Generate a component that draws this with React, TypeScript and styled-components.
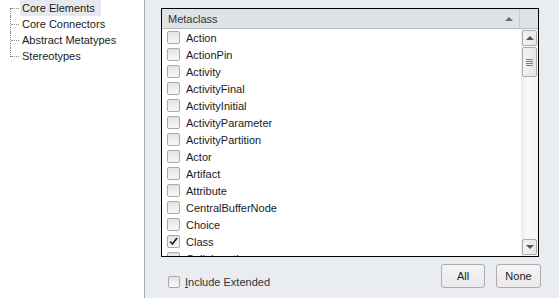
import * as React from 'react'
import styled, { createGlobalStyle } from 'styled-components'

const GlobalStyle = createGlobalStyle`
  html, body {
    margin: 0;
    padding: 0;
    background: #e9ecf1;
  }
  body {
    font-family: 'Liberation Sans', Arial, sans-serif;
    font-size: 11px;
    color: #000;
  }
`

const Window = styled.div`
  width: 559px;
  height: 298px;
  display: flex;
  background: #e9ecf1;
  overflow: hidden;
`

const TreePanel = styled.div`
  width: 145px;
  flex-shrink: 0;
  box-sizing: border-box;
  background: #fff;
  border-right: 1px solid #a3a8b1;
  padding-left: 10px;
  display: flex;
  flex-direction: column;
`

const TreeRow = styled.div<{ $first?: boolean; $last?: boolean }>`
  position: relative;
  height: 16px;
  display: flex;
  align-items: center;
  padding-left: 10px;
  color: #1a1a1a;

  &::before {
    content: '';
    position: absolute;
    left: 1px;
    top: 8px;
    width: 8px;
    border-top: 1px dotted #8a8a8a;
  }
  &::after {
    content: '';
    position: absolute;
    left: 0;
    top: ${p => (p.$first ? '8px' : '0')};
    height: ${p => (p.$last ? '9px' : p.$first ? '8px' : '16px')};
    border-left: 1px dotted #8a8a8a;
  }
`

const TreeLabel = styled.span<{ $selected?: boolean }>`
  height: 16px;
  line-height: 16px;
  padding: 0 6px 0 2px;
  background: ${p => (p.$selected ? '#e5e8ee' : 'transparent')};
`

const Content = styled.div`
  flex: 1;
  display: flex;
  flex-direction: column;
  padding: 8px 18px 0 16px;
`

const ListBox = styled.div`
  width: 378px;
  height: 249px;
  box-sizing: border-box;
  border: 1px solid #000;
  background: #fff;
  display: flex;
  flex-direction: column;
`

const Header = styled.div`
  height: 20px;
  box-sizing: border-box;
  display: flex;
  background: #dfe2e7;
  border-bottom: 1px solid #b4b8bf;
`

const HeaderCell = styled.div`
  flex: 1;
  display: flex;
  align-items: center;
  justify-content: space-between;
  padding: 0 6px 0 6px;
  color: #333;
`

const HeaderFiller = styled.div`
  width: 18px;
  border-left: 1px solid #c6c9cf;
`

const SortArrow = styled.span`
  width: 0;
  height: 0;
  border-left: 4px solid transparent;
  border-right: 4px solid transparent;
  border-bottom: 4px solid #6b6b6b;
`

const Body = styled.div`
  flex: 1;
  display: flex;
  overflow: hidden;
`

const Rows = styled.div`
  flex: 1;
  overflow: hidden;
`

const Row = styled.div`
  height: 17px;
  display: flex;
  align-items: center;
  padding-left: 5px;
  gap: 6px;
  color: #1a1a1a;
`

const Box = styled.span<{ $size: number }>`
  width: ${p => p.$size}px;
  height: ${p => p.$size}px;
  box-sizing: border-box;
  border: 1px solid #a9a9a9;
  border-radius: 2px;
  background: linear-gradient(#e4e4e4, #f7f7f7);
  display: flex;
  align-items: center;
  justify-content: center;
  flex-shrink: 0;
`

const Scrollbar = styled.div`
  width: 17px;
  margin-left: 1px;
  display: flex;
  flex-direction: column;
  background: linear-gradient(90deg, #ececec, #f9f9f9 40%, #f4f4f4);
  padding: 1px 1px 0 1px;
  box-sizing: border-box;
`

const ScrollButton = styled.div<{ $grow?: boolean }>`
  height: ${p => (p.$grow ? '30px' : '16px')};
  box-sizing: border-box;
  border: 1px solid #a9acb1;
  border-radius: 2px;
  background: linear-gradient(90deg, #f3f3f3, #e6e6e6);
  display: flex;
  align-items: center;
  justify-content: center;
  margin-bottom: 1px;
`

const Track = styled.div`
  flex: 1;
`

const Tri = styled.span<{ $down?: boolean }>`
  width: 0;
  height: 0;
  border-left: 4px solid transparent;
  border-right: 4px solid transparent;
  ${p =>
    p.$down ? 'border-top: 4px solid #555;' : 'border-bottom: 4px solid #555;'}
`

const Grip = styled.span`
  width: 7px;
  height: 7px;
  background: repeating-linear-gradient(#808080 0 1px, transparent 1px 2px);
`

const Footer = styled.div`
  display: flex;
  align-items: flex-start;
  margin-top: 7px;
`

const IncludeLabel = styled.label`
  display: flex;
  align-items: center;
  gap: 5px;
  margin: 12px 0 0 7px;
  height: 12px;
  color: #333;
  u {
    text-decoration: underline;
  }
`

const Buttons = styled.div`
  margin-left: auto;
  display: flex;
  gap: 11px;
`

const Button = styled.button<{ $w: number }>`
  width: ${p => p.$w}px;
  height: 24px;
  border: 1px solid #acacac;
  border-radius: 3px;
  background: linear-gradient(#f4f4f4, #eaeaea);
  font: inherit;
  color: #222;
  padding: 0;
`

const items = [
  'Action',
  'ActionPin',
  'Activity',
  'ActivityFinal',
  'ActivityInitial',
  'ActivityParameter',
  'ActivityPartition',
  'Actor',
  'Artifact',
  'Attribute',
  'CentralBufferNode',
  'Choice',
  'Class',
  'Collaboration',
]

const tree = ['Core Elements', 'Core Connectors', 'Abstract Metatypes', 'Stereotypes']

function Check({ checked, size = 13 }: { checked?: boolean; size?: number }) {
  return (
    <Box $size={size}>
      {checked && (
        <svg width="9" height="9" viewBox="0 0 9 9">
          <path d="M1 4.5 L3.5 7 L8 1" fill="none" stroke="#222" strokeWidth="1.7" />
        </svg>
      )}
    </Box>
  )
}

export default function App() {
  return (
    <Window>
      <GlobalStyle />
      <TreePanel>
        {tree.map((t, i) => (
          <TreeRow key={t} $first={i === 0} $last={i === tree.length - 1}>
            <TreeLabel $selected={i === 0}>{t}</TreeLabel>
          </TreeRow>
        ))}
      </TreePanel>
      <Content>
        <ListBox>
          <Header>
            <HeaderCell>
              Metaclass
              <SortArrow />
            </HeaderCell>
            <HeaderFiller />
          </Header>
          <Body>
            <Rows>
              {items.map(name => (
                <Row key={name}>
                  <Check checked={name === 'Class'} />
                  {name}
                </Row>
              ))}
            </Rows>
            <Scrollbar>
              <ScrollButton>
                <Tri />
              </ScrollButton>
              <ScrollButton $grow>
                <Grip />
              </ScrollButton>
              <Track />
              <ScrollButton>
                <Tri $down />
              </ScrollButton>
            </Scrollbar>
          </Body>
        </ListBox>
        <Footer>
          <IncludeLabel>
            <Check size={12} />
            <span>
              <u>I</u>nclude Extended
            </span>
          </IncludeLabel>
          <Buttons>
            <Button $w={44}>All</Button>
            <Button $w={45}>None</Button>
          </Buttons>
        </Footer>
      </Content>
    </Window>
  )
}
